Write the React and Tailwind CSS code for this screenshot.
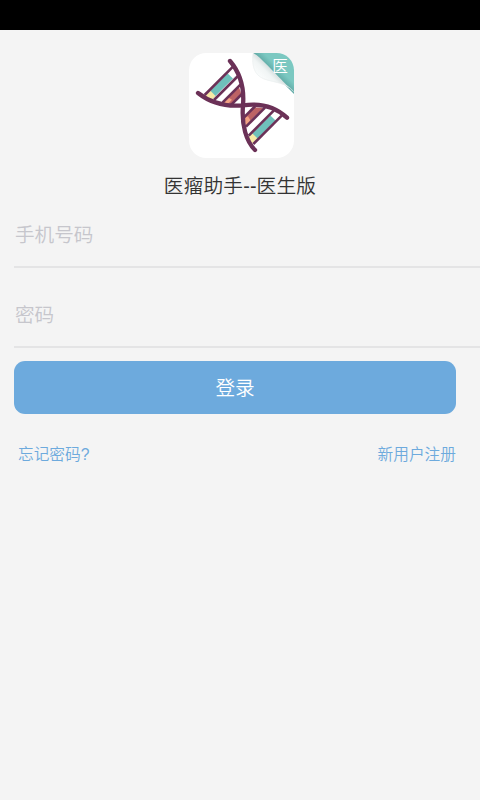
import React, {useState} from 'react';


function Logo() {
    return (
        <svg className="ml-[3px] h-[105px] w-[105px]" viewBox="15 15 315 315" fill="none">
            <defs>
                <clipPath id="card">
                    <rect x="15" y="15" width="315" height="315" rx="52"/>
                </clipPath>
                <linearGradient id="curl" x1="228" y1="100" x2="268" y2="60" gradientUnits="userSpaceOnUse">
                    <stop offset="0" stopColor="#fdfefe"/>
                    <stop offset="0.6" stopColor="#f1f5f5"/>
                    <stop offset="1" stopColor="#cbd7d6"/>
                </linearGradient>
                <linearGradient id="corner" x1="266" y1="74" x2="282" y2="58" gradientUnits="userSpaceOnUse">
                    <stop offset="0" stopColor="#5fa9a5"/>
                    <stop offset="1" stopColor="#7bc8c1"/>
                </linearGradient>
            </defs>
            <g clipPath="url(#card)">
                <rect x="15" y="15" width="315" height="315" fill="#fff"/>

                {/* renkli baz ciftleri */}
                <path d="M76 147 L146 77" stroke="#6fc0bb" strokeWidth="22"/>
                <path d="M69 154 L87 136" stroke="#f8eaa6" strokeWidth="22"/>
                <path d="M139 84 L154 69" stroke="#fff" strokeWidth="22"/>
                <path d="M120 162 L165 117 L173 140 L145 169 Z" fill="#bd6365"/>
                <path d="M118 164 L134 149 L144 155 L130 170 Z" fill="#f2a184"/>
                <path d="M183 207 L212 178 L238 180 L186 232 Z" fill="#bd6365"/>
                <path d="M182 209 L192 205 L200 218 L185 234 Z" fill="#f2a184"/>
                <path d="M202 275 L279 198" stroke="#6fc0bb" strokeWidth="22"/>
                <path d="M198 279 L213 264" stroke="#f8eaa6" strokeWidth="22"/>
                <path d="M267 210 L282 195" stroke="#fff" strokeWidth="22"/>

                <g stroke="#6b3157" strokeWidth="8">
                    <path d="M62 141 L147 56"/>
                    <path d="M90 156 L162 84"/>
                    <path d="M116 163 L170 109"/>
                    <path d="M142 170 L177 135"/>
                    <path d="M180 208 L214 174"/>
                    <path d="M186 236 L243 179"/>
                    <path d="M194 263 L269 188"/>
                    <path d="M208 288 L293 203"/>
                </g>
                <g stroke="#6b3157" strokeWidth="13" strokeLinecap="round">
                    <path d="M138 39 C166 72 182 112 177 172 C172 232 187 281 213 306"/>
                    <path d="M42 135 C80 165 124 177 177 172 C232 164 276 178 309 209"/>
                </g>

                {/* kivrilmis kose */}
                <path d="M207 15 L330 138 L330 15 Z" fill="url(#corner)"/>
                <path d="M207 15 C203 52 210 80 238 92 C266 104 308 102 330 134 C316 119 268 70 244 46 C230 31 220 21 207 15 Z"
                      fill="url(#curl)"/>
                <path d="M207 17 C203 52 210 80 238 92 C266 104 308 102 329 131" stroke="#eaeeee" strokeWidth="2"/>
            </g>
            <text x="265" y="73" fontSize="47" fill="#fff" className="font-['Noto_Sans_CJK_SC',sans-serif]">医</text>
        </svg>
    );
}


export default function Login() {

    const [phone, setPhone] = useState('')
    const [password, setPassword] = useState('')

    return (
        <div className="min-h-screen w-full bg-[#f4f4f4] font-['Liberation_Sans','Noto_Sans_CJK_SC',sans-serif] font-[350]">

            <div className="h-[30px] bg-black"/>

            <div className="flex flex-col items-center pt-[23px]">
                <Logo/>
                <h1 className="mt-3.5 h-[27px] text-[19.7px] leading-7 font-[350] tracking-[0.15px] whitespace-nowrap text-[#333]">医瘤助手--医生版</h1>
            </div>

            <form onSubmit={(e) => e.preventDefault()}>
                <div className="ml-3.5 h-[69px] border-b-2 border-[#e4e4e5] pt-[22px]">
                    <input type="tel" placeholder="手机号码" value={phone}
                           onChange={(e) => setPhone(e.target.value)}
                           className="block h-7 w-full pl-px text-[19.6px] leading-7 outline-none placeholder:text-[#c6c6cc]"/>
                </div>
                <div className="ml-3.5 h-20 border-b-2 border-[#e4e4e5] pt-[33px]">
                    <input type="password" placeholder="密码" value={password}
                           onChange={(e) => setPassword(e.target.value)}
                           className="block h-7 w-full pl-px text-[19.6px] leading-7 outline-none placeholder:text-[#c6c6cc]"/>
                </div>

                <button type="submit"
                        className="mt-[13px] ml-3.5 block h-[53px] w-[442px] rounded-[11px] bg-[#6daadd] pt-[3px] text-[19.6px] text-white">
                    登录
                </button>
            </form>

            <div className="mt-[29px] flex justify-between pr-6 pl-[18px] text-[15.7px] leading-6 text-[#6daadd]">
                <a href="#forgot">忘记密码?</a>
                <a href="#register">新用户注册</a>
            </div>

        </div>
    );
}
